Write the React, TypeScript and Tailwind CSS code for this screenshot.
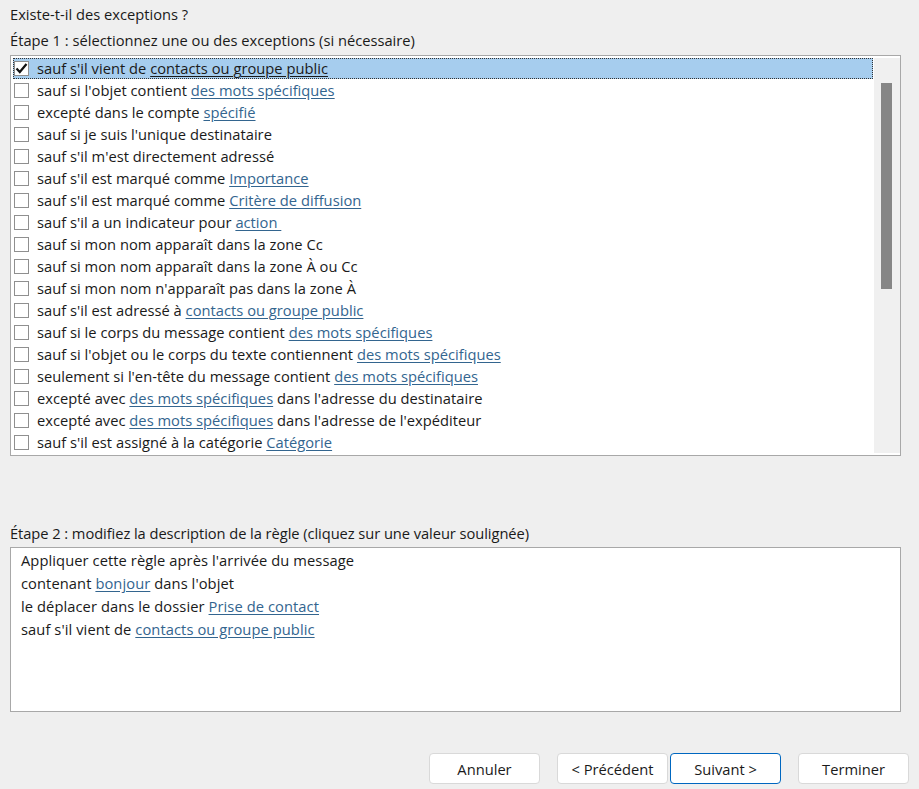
const RULES: [string, string?, string?][] = [
  ["sauf s'il vient de ", "contacts ou groupe public"],
  ["sauf si l'objet contient ", "des mots spécifiques"],
  ["excepté dans le compte ", "spécifié"],
  ["sauf si je suis l'unique destinataire"],
  ["sauf s'il m'est directement adressé"],
  ["sauf s'il est marqué comme ", "Importance"],
  ["sauf s'il est marqué comme ", "Critère de diffusion"],
  ["sauf s'il a un indicateur pour ", "action "],
  ["sauf si mon nom apparaît dans la zone Cc"],
  ["sauf si mon nom apparaît dans la zone À ou Cc"],
  ["sauf si mon nom n'apparaît pas dans la zone À"],
  ["sauf s'il est adressé à ", "contacts ou groupe public"],
  ["sauf si le corps du message contient ", "des mots spécifiques"],
  ["sauf si l'objet ou le corps du texte contiennent ", "des mots spécifiques"],
  ["seulement si l'en-tête du message contient ", "des mots spécifiques"],
  ["excepté avec ", "des mots spécifiques", " dans l'adresse du destinataire"],
  ["excepté avec ", "des mots spécifiques", " dans l'adresse de l'expéditeur"],
  ["sauf s'il est assigné à la catégorie ", "Catégorie"],
];

function Lnk({ children }: { children: string }) {
  return <span className="text-[#33658f] underline underline-offset-2 whitespace-pre">{children}</span>;
}

function Btn({ label, focus, className }: { label: string; focus?: boolean; className?: string }) {
  return (
    <button
      type="button"
      className={`w-[111px] h-[31px] pt-px rounded-[4px] bg-white border text-[#1a1a1a] ${focus ? "border-[#0067c0]" : "border-[#d9d9d9]"} ${className ?? ""}`}
    >
      {label}
    </button>
  );
}

export default function App() {
  return (
    <div className="w-[919px] h-[789px] overflow-hidden bg-[#efefef] text-[#1a1a1a] text-[14.7px] font-['Open_Sans','Liberation_Sans',sans-serif]">
      <div className="pl-[10px] pt-[4px] h-[22px] leading-[20px]">Existe-t-il des exceptions ?</div>
      <div className="pl-[10px] pt-[6px] h-[28px] leading-[24px]">Étape 1 : sélectionnez une ou des exceptions (si nécessaire)</div>

      <div className="ml-[10px] mt-[5px] w-[891px] h-[401px] flex bg-white border border-[#a8a8a8] p-[2px] pr-0">
        <div className="w-[861px]">
          {RULES.map((r, i) => (
            <div
              key={i}
              className={`flex items-center whitespace-pre ${i === 0 ? "h-[21px] bg-[#a6cdee] outline-1 -outline-offset-1 outline-dotted outline-[#333333]" : "h-[22px]"}`}
            >
              <span className="ml-px w-[15px] h-[15px] shrink-0 flex items-center justify-center bg-white border border-[#8f8f8f]">
                {i === 0 && (
                  <svg width="13" height="13" viewBox="0 0 13 13" fill="none">
                    <path d="M1.5 6.5 L4.8 10 L11.5 2" stroke="#111111" strokeWidth="2.2" />
                  </svg>
                )}
              </span>
              <span className="ml-[8px] tracking-[0.02px]">
                {r[0]}
                {r[1] &&
                  (i === 0 ? (
                    <span className="underline underline-offset-2">{r[1]}</span>
                  ) : (
                    <Lnk>{r[1]}</Lnk>
                  ))}
                {r[2]}
              </span>
            </div>
          ))}
        </div>
        <div className="ml-px w-[26px] bg-[#f0f0f0] pt-[25px] pl-[7px]">
          <div className="w-[11px] h-[206px] bg-[#868686]" />
        </div>
      </div>

      <div className="pl-[10px] mt-[65px] h-[26px] leading-[24px] tracking-[-0.065px]">Étape 2 : modifiez la description de la règle (cliquez sur une valeur soulignée)</div>
      <div className="ml-[10px] w-[891px] h-[165px] bg-white border border-[#a8a8a8] pl-[10px] pt-px leading-[23px] tracking-[0.08px]">
        <div>Appliquer cette règle après l'arrivée du message</div>
        <div>contenant <Lnk>bonjour</Lnk> dans l'objet</div>
        <div>le déplacer dans le dossier <Lnk>Prise de contact</Lnk></div>
        <div>sauf s'il vient de <Lnk>contacts ou groupe public</Lnk></div>
      </div>

      <div className="mt-[41px] flex justify-end pr-[10px]">
        <Btn label="Annuler" className="mr-[17px]" />
        <Btn label="< Précédent" className="mr-[2px]" />
        <Btn label="Suivant >" focus className="mr-[17px]" />
        <Btn label="Terminer" />
      </div>
    </div>
  );
}
